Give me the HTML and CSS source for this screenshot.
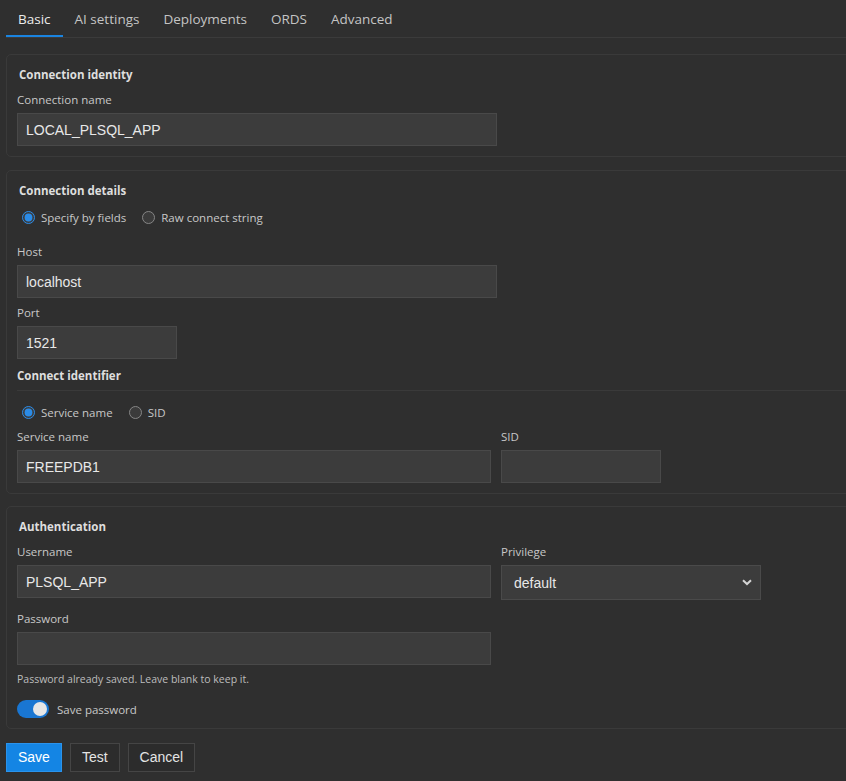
FILE: index.html
```html
<!DOCTYPE html>
<html lang="en">
<head>
  <meta charset="UTF-8">
  <title>Connection</title>
  <meta name="viewport" content="width=device-width, initial-scale=1.0">
  <link rel="stylesheet" href="styles.css">
</head>
<body>

  <div class="page">
    <div class="tabs">
      <div class="tab active">Basic</div>
      <div class="tab">AI settings</div>
      <div class="tab">Deployments</div>
      <div class="tab">ORDS</div>
      <div class="tab">Advanced</div>
    </div>

    <form class="form" autocomplete="off">
      <div class="section identity">
        <div class="section-title">Connection identity</div>
        <label class="field-label" for="conn-name">Connection name</label>
        <input type="text" id="conn-name" class="input wide" value="LOCAL_PLSQL_APP">
      </div>

      <div class="section">
        <div class="section-title">Connection details</div>
        <div class="radio-row first">
          <label class="radio"><input type="radio" name="mode" checked> Specify by fields</label>
          <label class="radio"><input type="radio" name="mode"> Raw connect string</label>
        </div>

        <label class="field-label host-label" for="host">Host</label>
        <input type="text" id="host" class="input wide" value="localhost">

        <label class="field-label port-label" for="port">Port</label>
        <input type="text" id="port" class="input short" value="1521">

        <div class="sub-title">Connect identifier</div>
        <div class="sub-group">
          <div class="radio-row">
            <label class="radio"><input type="radio" name="ident" checked> Service name</label>
            <label class="radio"><input type="radio" name="ident"> SID</label>
          </div>
          <div class="grid">
            <div class="col">
              <label class="field-label" for="service">Service name</label>
              <input type="text" id="service" class="input" value="FREEPDB1">
            </div>
            <div class="col">
              <label class="field-label" for="sid">SID</label>
              <input type="text" id="sid" class="input short">
            </div>
          </div>
        </div>
      </div>

      <div class="section">
        <div class="section-title">Authentication</div>
        <div class="grid">
          <div class="col">
            <label class="field-label" for="user">Username</label>
            <input type="text" id="user" class="input" value="PLSQL_APP">
          </div>
          <div class="col">
            <label class="field-label" for="priv">Privilege</label>
            <div class="select-wrap">
              <select id="priv" class="select">
                <option>default</option>
                <option>SYSDBA</option>
                <option>SYSOPER</option>
              </select>
              <svg class="chevron" width="10" height="7" viewBox="0 0 10 7"><path d="M1 1.2 L5 5 L9 1.2" fill="none" stroke="#d4d4d4" stroke-width="2"/></svg>
            </div>
          </div>
        </div>

        <label class="field-label pass-label" for="pass">Password</label>
        <input type="password" id="pass" class="input pass">
        <div class="hint">Password already saved. Leave blank to keep it.</div>

        <label class="toggle-row">
          <span class="toggle"><span class="knob"></span></span>
          Save password
        </label>
      </div>

      <div class="actions">
        <button type="button" class="btn primary">Save</button>
        <button type="button" class="btn">Test</button>
        <button type="button" class="btn">Cancel</button>
      </div>
    </form>
  </div>

</body>
</html>
```

FILE: styles.css
```css
* {
  box-sizing: border-box;
  margin: 0;
  padding: 0;
}

html, body {
  background-color: #2f2f2f;
  overflow: hidden;
}

body {
  font-family: "Open Sans", "Noto Sans", sans-serif;
  color: #c8c8c8;
  color-scheme: dark;
  min-height: 100vh;
}

.page {
  width: 880px;
  padding: 0 0 0 6px;
}

/* tabs */
.tabs {
  display: flex;
  border-bottom: 1px solid #3b3b3b;
}

.tab {
  height: 37px;
  padding: 3px 12px 0;
  line-height: 32px;
  font-size: 13.5px;
  color: #c4c4c4;
  border-bottom: 2px solid transparent;
}

.tab.active {
  color: #ececec;
  border-bottom-color: #1a84e0;
}

.form {
  padding-top: 16px;
}

/* sections */
.section {
  border: 1px solid #3a3a3a;
  border-radius: 5px;
  padding: 11px 10px 10px;
  margin-bottom: 12px;
  display: flex;
  flex-direction: column;
  align-items: flex-start;
}

.section.identity {
  margin-bottom: 13px;
}

.section-title,
.sub-title {
  font-size: 11.5px;
  font-weight: bold;
  line-height: 16px;
  color: #dedede;
  padding: 1px 0 0 2px;
  margin-bottom: 9px;
}

.sub-title {
  padding: 0;
  margin-top: 9px;
  margin-bottom: 6px;
}

.field-label {
  display: block;
  font-size: 11.5px;
  line-height: 16px;
  margin-bottom: 5px;
}

.input,
.select {
  font-family: "Liberation Sans", Arial, sans-serif;
  font-size: 14px;
  color: #e8e8e8;
  background-color: #3c3c3c;
  border: 1px solid #494949;
  height: 33px;
  padding: 0 8px;
  outline: none;
}

.input { width: 474px; }
.input.wide { width: 480px; }
.input.short { width: 160px; }

.host-label { margin-top: 17px; }
.port-label { margin-top: 7px; }
.pass-label { margin-top: 11px; }

/* radios */
.radio-row {
  display: flex;
  height: 20px;
  align-items: center;
  gap: 11px;
}

.radio-row.first {
  margin-top: -1px;
}

.radio {
  display: flex;
  align-items: center;
  font-size: 11.5px;
  color: #c8c8c8;
}

.radio input {
  width: 13px;
  height: 13px;
  margin: 0 6px 0 5px;
  accent-color: #2b8ce8;
}

.sub-group {
  align-self: stretch;
  border-top: 1px solid #3a3a3a;
  padding-top: 11px;
}

.sub-group .radio-row {
  margin-bottom: 7px;
}

.grid {
  display: grid;
  grid-template-columns: 474px auto;
  gap: 10px;
}

/* select */
.select-wrap {
  position: relative;
  width: 260px;
}

.select {
  appearance: none;
  width: 260px;
  height: 35px;
  padding: 0 12px;
  border-color: #4a4a4a;
}

.chevron {
  position: absolute;
  right: 9px;
  top: 14px;
  pointer-events: none;
}

.pass {
  width: 474px;
}

.hint {
  font-size: 10.5px;
  line-height: 14px;
  margin-top: 7px;
  color: #bdbdbd;
}

/* toggle */
.toggle-row {
  display: flex;
  align-items: center;
  gap: 8px;
  font-size: 11.5px;
  margin-top: 14px;
}

.toggle {
  width: 32px;
  height: 18px;
  border-radius: 9px;
  background-color: #1976d2;
  position: relative;
}

.knob {
  position: absolute;
  top: 2px;
  right: 2px;
  width: 14px;
  height: 14px;
  border-radius: 50%;
  background-color: #e6e6e6;
}

/* buttons */
.actions {
  display: flex;
  gap: 8px;
  padding-top: 2px;
}

.btn {
  font-family: "Liberation Sans", Arial, sans-serif;
  font-size: 14px;
  line-height: 27px;
  color: #e4e4e4;
  background-color: #2c2c2c;
  border: 1px solid #454545;
  height: 29px;
  padding: 0 11px;
  cursor: pointer;
}

.btn.primary {
  background-color: #1485e4;
  border-color: #2a93ec;
  color: #fff;
}
```
